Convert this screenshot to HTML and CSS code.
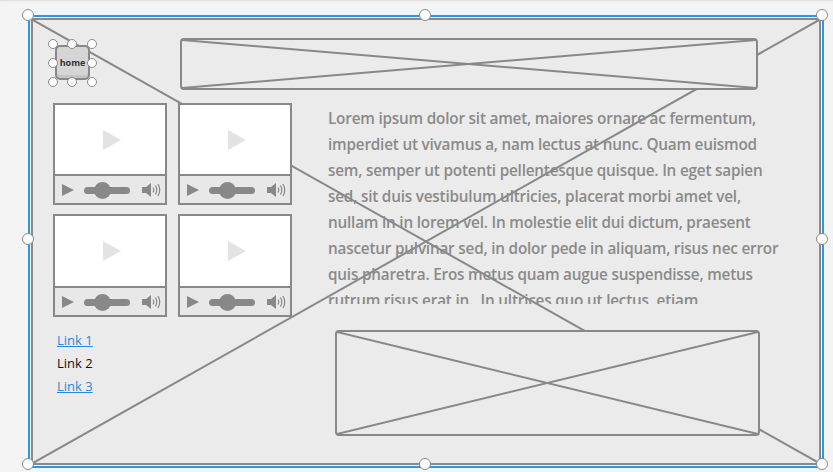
FILE: index.html
```html
<!DOCTYPE html>
<html>
<head>
<meta charset="utf-8">
<link rel="stylesheet" href="styles.css">
</head>
<body>
<div class="frame">
  <div class="canvas">
    <svg class="bigx" preserveAspectRatio="none" viewBox="0 0 100 100"><line x1="0" y1="0" x2="100" y2="100" vector-effect="non-scaling-stroke"/><line x1="0" y1="100" x2="100" y2="0" vector-effect="non-scaling-stroke"/></svg>
    <div class="grid">
      <div class="home-wrap">
        <div class="home">home</div>
        <span class="h h-tl"></span><span class="h h-tc"></span><span class="h h-tr"></span>
        <span class="h h-ml"></span><span class="h h-mr"></span>
        <span class="h h-bl"></span><span class="h h-bc"></span><span class="h h-br"></span>
      </div>
      <div class="ph banner"><svg preserveAspectRatio="none" viewBox="0 0 100 100"><line x1="0" y1="0" x2="100" y2="100" vector-effect="non-scaling-stroke"/><line x1="0" y1="100" x2="100" y2="0" vector-effect="non-scaling-stroke"/></svg></div>

      <div class="video v1">
        <div class="screen"><svg width="18" height="20" viewBox="0 0 18 20"><polygon points="0,0 18,10 0,20" fill="#e3e3e3"/></svg></div>
        <div class="controls">
          <svg width="12" height="12" viewBox="0 0 12 12"><polygon points="0,0 12,6 0,12" fill="#888"/></svg>
          <div class="slider"><span class="knob"></span></div>
          <svg class="spk" width="20" height="14" viewBox="0 0 20 14"><polygon points="0,4 4,4 9,0 9,14 4,10 0,10" fill="#888"/><path d="M11 4.5 Q12.5 7 11 9.5 M13.5 2.5 Q16 7 13.5 11.5 M16 1 Q19.5 7 16 13" fill="none" stroke="#888" stroke-width="1.2"/></svg>
        </div>
      </div>
      <div class="video v2">
        <div class="screen"><svg width="18" height="20" viewBox="0 0 18 20"><polygon points="0,0 18,10 0,20" fill="#e3e3e3"/></svg></div>
        <div class="controls">
          <svg width="12" height="12" viewBox="0 0 12 12"><polygon points="0,0 12,6 0,12" fill="#888"/></svg>
          <div class="slider"><span class="knob"></span></div>
          <svg class="spk" width="20" height="14" viewBox="0 0 20 14"><polygon points="0,4 4,4 9,0 9,14 4,10 0,10" fill="#888"/><path d="M11 4.5 Q12.5 7 11 9.5 M13.5 2.5 Q16 7 13.5 11.5 M16 1 Q19.5 7 16 13" fill="none" stroke="#888" stroke-width="1.2"/></svg>
        </div>
      </div>
      <p class="text">Lorem ipsum dolor sit amet, maiores ornare ac fermentum,<br>imperdiet ut vivamus a, nam lectus at nunc. Quam euismod<br>sem, semper ut potenti pellentesque quisque. In eget sapien<br>sed, sit duis vestibulum ultricies, placerat morbi amet vel,<br>nullam in in lorem vel. In molestie elit dui dictum, praesent<br>nascetur pulvinar sed, in dolor pede in aliquam, risus nec error<br>quis pharetra. Eros metus quam augue suspendisse, metus<br>rutrum risus erat in. &nbsp;In ultrices quo ut lectus, etiam</p>
      <div class="video v3">
        <div class="screen"><svg width="18" height="20" viewBox="0 0 18 20"><polygon points="0,0 18,10 0,20" fill="#e3e3e3"/></svg></div>
        <div class="controls">
          <svg width="12" height="12" viewBox="0 0 12 12"><polygon points="0,0 12,6 0,12" fill="#888"/></svg>
          <div class="slider"><span class="knob"></span></div>
          <svg class="spk" width="20" height="14" viewBox="0 0 20 14"><polygon points="0,4 4,4 9,0 9,14 4,10 0,10" fill="#888"/><path d="M11 4.5 Q12.5 7 11 9.5 M13.5 2.5 Q16 7 13.5 11.5 M16 1 Q19.5 7 16 13" fill="none" stroke="#888" stroke-width="1.2"/></svg>
        </div>
      </div>
      <div class="video v4">
        <div class="screen"><svg width="18" height="20" viewBox="0 0 18 20"><polygon points="0,0 18,10 0,20" fill="#e3e3e3"/></svg></div>
        <div class="controls">
          <svg width="12" height="12" viewBox="0 0 12 12"><polygon points="0,0 12,6 0,12" fill="#888"/></svg>
          <div class="slider"><span class="knob"></span></div>
          <svg class="spk" width="20" height="14" viewBox="0 0 20 14"><polygon points="0,4 4,4 9,0 9,14 4,10 0,10" fill="#888"/><path d="M11 4.5 Q12.5 7 11 9.5 M13.5 2.5 Q16 7 13.5 11.5 M16 1 Q19.5 7 16 13" fill="none" stroke="#888" stroke-width="1.2"/></svg>
        </div>
      </div>

      <ul class="links">
        <li><a class="lnk">Link 1</a></li>
        <li>Link 2</li>
        <li><a class="lnk">Link 3</a></li>
      </ul>
      <div class="ph footerbox"><svg preserveAspectRatio="none" viewBox="0 0 100 100"><line x1="0" y1="0" x2="100" y2="100" vector-effect="non-scaling-stroke"/><line x1="0" y1="100" x2="100" y2="0" vector-effect="non-scaling-stroke"/></svg></div>
    </div>
  </div>
  <span class="H H-tl"></span><span class="H H-tc"></span><span class="H H-tr"></span>
  <span class="H H-ml"></span><span class="H H-mr"></span>
  <span class="H H-bl"></span><span class="H H-bc"></span><span class="H H-br"></span>
</div>
</body>
</html>
```
FILE: styles.css
```css
* { box-sizing: border-box; }
html, body { margin: 0; padding: 0; }
body {
  width: 833px;
  height: 472px;
  background: #f4f4f4;
  box-shadow: inset 0 2px 2px -1px #dcdcdc;
  padding: 15px 0 0 28px;
  overflow: hidden;
  font-family: "Open Sans", Lato, sans-serif;
}
.frame {
  position: relative;
  width: 796px;
  height: 453px;
  border: 2px solid #2b96ea;
  padding: 1px;
}
.canvas {
  position: relative;
  width: 100%;
  height: 100%;
  border: 2px solid #888;
  background: #ebebeb;
}
.bigx {
  position: absolute;
  inset: 0;
  width: 100%;
  height: 100%;
}
svg line { stroke: #888; stroke-width: 2; }
.grid {
  position: relative;
  display: grid;
  grid-template-columns: 114px 114px 457px;
  column-gap: 11px;
  grid-template-rows: 56px 102px 103px auto;
  row-gap: 9px;
  padding: 18px 0 0 20px;
}
.home-wrap {
  grid-column: 1; grid-row: 1;
  position: relative;
  width: 35px; height: 35px;
  margin: 7px 0 0 2px;
}
.home {
  width: 35px; height: 35px;
  border: 2px solid #888;
  border-radius: 5px;
  background: #d5d5d5;
  box-shadow: inset 0 -3px 0 #c4c4c4;
  font: bold 9px "Open Sans", sans-serif;
  color: #333;
  display: flex; align-items: center; justify-content: center;
  padding-bottom: 1px;
}
.h {
  position: absolute;
  width: 10px; height: 10px;
  border-radius: 50%;
  background: #fff;
  border: 1px solid #8a8a8a;
}
.h-tl { left: -7px; top: -6px; }
.h-tc { left: 12px; top: -6px; }
.h-tr { left: 32px; top: -6px; }
.h-ml { left: -7px; top: 13px; }
.h-mr { left: 32px; top: 13px; }
.h-bl { left: -7px; top: 32px; }
.h-bc { left: 12px; top: 32px; }
.h-br { left: 32px; top: 32px; }
.ph {
  position: relative;
  border: 2px solid #888;
  border-radius: 4px;
  background: #ebebeb;
}
.ph svg { position: absolute; inset: 0; width: 100%; height: 100%; }
.banner {
  grid-column: 2 / 4; grid-row: 1;
  margin: 0 2px 0 2px;
  height: 52px;
}
.video {
  width: 114px;
  border: 2px solid #888;
  background: #fff;
  display: flex; flex-direction: column;
}
.v1 { grid-column: 1; grid-row: 2; }
.v2 { grid-column: 2; grid-row: 2; }
.v3 { grid-column: 1; grid-row: 3; }
.v4 { grid-column: 2; grid-row: 3; }
.screen {
  flex: 1;
  display: flex; align-items: center; justify-content: center;
  padding-left: 4px;
}
.controls {
  height: 29px;
  border-top: 2px solid #888;
  background: #e8e8e8;
  display: flex; align-items: center;
  padding: 1px 3px 0 7px;
}
.slider {
  position: relative;
  margin-left: 10px;
  width: 46px; height: 7px;
  border-radius: 4px;
  background: #888;
}
.knob {
  position: absolute;
  left: 10px; top: -5px;
  width: 17px; height: 17px;
  border-radius: 50%;
  background: #888;
}
.spk { margin-left: auto; }
.text {
  grid-column: 3; grid-row: 2 / 4;
  margin: 2px 0 0 25px;
  width: 470px;
  height: 199px;
  overflow: hidden;
  white-space: nowrap;
  font-size: 15.3px;
  font-weight: 600;
  line-height: 26px;
  letter-spacing: -0.2px;
  color: #8a8a8a;
  position: relative;
}
.links {
  grid-column: 1 / 3; grid-row: 4;
  list-style: none;
  margin: 0; padding: 3px 0 0 4px;
  font-size: 13px;
  line-height: 23px;
  color: #111;
}
.lnk { color: #1f8ae0; text-decoration: underline; }
.footerbox {
  grid-column: 3; grid-row: 4;
  margin: 4px 0 0 32px;
  width: 425px;
  height: 106px;
}
.H {
  position: absolute;
  width: 12px; height: 12px;
  border-radius: 50%;
  background: #fff;
  border: 1px solid #8a8a8a;
}
.H-tl { left: -8px; top: -8px; }
.H-tc { left: 389px; top: -8px; }
.H-tr { left: 786px; top: -8px; }
.H-ml { left: -8px; top: 216px; }
.H-mr { left: 786px; top: 216px; }
.H-bl { left: -8px; top: 441px; }
.H-bc { left: 389px; top: 441px; }
.H-br { left: 786px; top: 441px; }
```
